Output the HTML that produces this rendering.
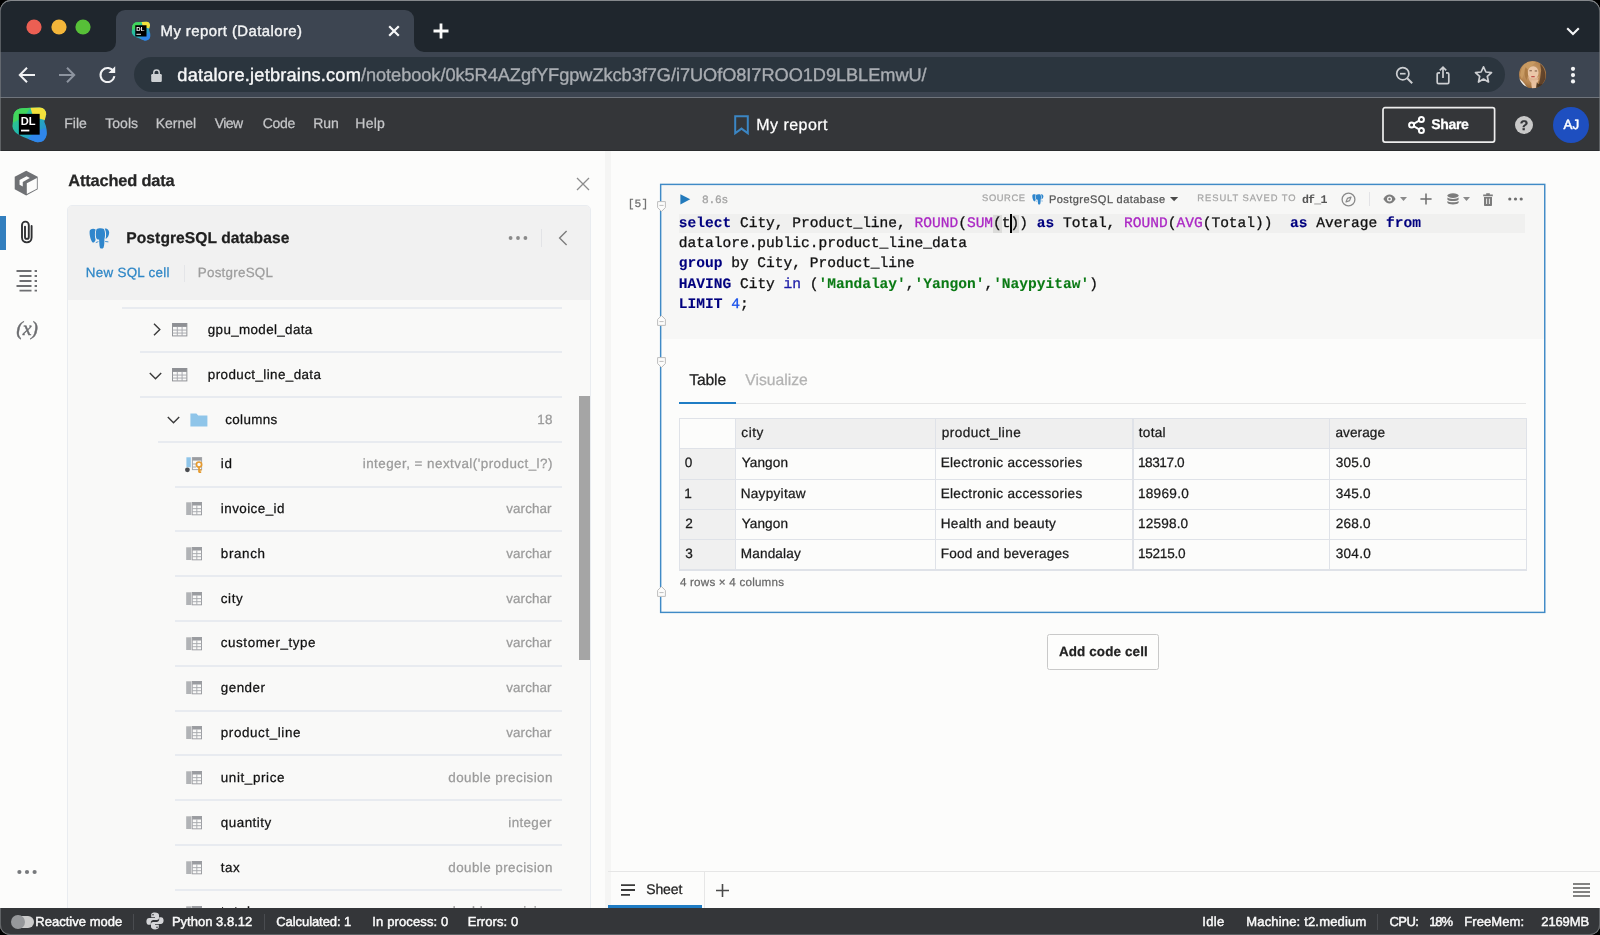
<!DOCTYPE html>
<html lang="en"><head><meta charset="utf-8"><title>My report (Datalore)</title>
<style>

*{box-sizing:border-box;margin:0;padding:0}
html,body{width:1600px;height:935px;overflow:hidden;background:#000}
body{font-family:"Liberation Sans",sans-serif;}
#win{will-change:transform;position:absolute;left:0;top:0;width:1600px;height:935px;overflow:hidden;background:#fcfcfb;border-radius:11px 11px 10px 10px}
.a{position:absolute}
.t{position:absolute;white-space:pre;line-height:1;font-kerning:normal;text-rendering:geometricPrecision}
.s{font-family:"Liberation Sans",sans-serif;-webkit-text-stroke:0.25px currentColor}
.m{font-family:"Liberation Mono",monospace}
.r{font-family:"Liberation Serif",serif}
svg{position:absolute;overflow:visible}
.hl{position:absolute;height:2px;background:#e8ebf0}

.code{position:absolute;white-space:pre;line-height:1;text-rendering:geometricPrecision;-webkit-text-stroke:0.3px currentColor;font-family:"Liberation Mono",monospace;font-size:14.55px;color:#101010}
.code .k{color:#00007f;font-weight:700;-webkit-text-stroke-width:0.1px}
.code .f{color:#ab27c4}
.code .g{color:#0a7a14;font-weight:700;-webkit-text-stroke-width:0.1px}
.code .i{color:#1c1ca8}
.code .n{color:#1750eb}

</style></head>
<body>
<div id="win">
<!-- browser chrome -->
<div class="a" style="left:0;top:0;width:1600px;height:52px;background:#1f262d"></div>
<div class="a" style="left:0;top:52px;width:1600px;height:46px;background:#3d4551"></div>
<div class="a" style="left:116px;top:10px;width:298px;height:43px;background:#3d4551;border-radius:9px 9px 0 0"></div>
<svg style="left:106px;top:42px" width="10" height="10" viewBox="0 0 10 10"><path d="M10 0V10H0A10 10 0 0 0 10 0Z" fill="#3d4551"/></svg>
<svg style="left:414px;top:42px" width="10" height="10" viewBox="0 0 10 10"><path d="M0 0V10H10A10 10 0 0 1 0 0Z" fill="#3d4551"/></svg>
<svg style="left:25.7px;top:19px" width="16" height="16" viewBox="0 0 16 16"><circle cx="8" cy="8" r="7.6" fill="#ec5f53"/></svg>
<svg style="left:50.6px;top:19px" width="16" height="16" viewBox="0 0 16 16"><circle cx="8" cy="8" r="7.6" fill="#f4b63a"/></svg>
<svg style="left:75.4px;top:19px" width="16" height="16" viewBox="0 0 16 16"><circle cx="8" cy="8" r="7.6" fill="#57c038"/></svg>
<svg style="left:131.0px;top:21.0px" width="20.0" height="20.0" viewBox="0 0 40 40"><defs><linearGradient id="fvg" x1="0" y1="0" x2="1" y2="1"><stop offset="0" stop-color="#3bcf6a"/><stop offset="0.45" stop-color="#21b8b0"/><stop offset="1" stop-color="#2f7de1"/></linearGradient></defs><path d="M3 9 Q5 3 12 2.5 L30 1.5 Q38 2 38 9 L36 17 Q40 26 38 33 Q35 40 27 39 L12 33 Q2 29 1.5 22 Z" fill="url(#fvg)"/><path d="M21 2 L31 1.5 Q38 2 38 9 L36.5 15 L24 12 Z" fill="#f3e23c"/><path d="M3 9 Q5 3 12 2.5 L21 2 L14 12 L2 18 Z" fill="#42d65c"/><path d="M26 28 L37 24 Q40 30 37 35 Q34 40 27 39 L18 35.5 Z" fill="#2f86ea"/><rect x="8.5" y="8.5" width="22.5" height="22.5" fill="#000"/><text x="10.6" y="20.3" font-family="Liberation Sans, sans-serif" font-weight="700" font-size="11.5" fill="#fff" textLength="16" lengthAdjust="spacingAndGlyphs">DL</text><rect x="10.8" y="25.6" width="9" height="1.9" fill="#fff"/></svg>
<span class="t s" id="t0" style="left:160.60px;top:25.00px;font-size:14.90px;color:#f3f4f5;letter-spacing:0.428px;-webkit-text-stroke-width:0.4px;">My report (Datalore)</span>
<svg style="left:388px;top:25px" width="12" height="12" viewBox="0 0 12 12"><path d="M1.2 1.2L10.8 10.8M10.8 1.2L1.2 10.8" stroke="#f6f7f8" stroke-width="2.2" fill="none"/></svg>
<svg style="left:433px;top:23px" width="16" height="16" viewBox="0 0 16 16"><path d="M8 0.5V15.5M0.5 8H15.5" stroke="#fafafa" stroke-width="2.8" fill="none"/></svg>
<svg style="left:1566px;top:27px" width="14" height="9" viewBox="0 0 14 9"><path d="M1.2 1.2L7 7L12.8 1.2" stroke="#f4f5f6" stroke-width="2.1" fill="none"/></svg>
<svg style="left:18px;top:65.5px" width="18" height="18" viewBox="0 0 18 18"><path d="M17 9H2.5M9 1.8L1.8 9L9 16.2" stroke="#f1f2f4" stroke-width="2" fill="none"/></svg>
<svg style="left:58px;top:65.5px" width="18" height="18" viewBox="0 0 18 18"><path d="M1 9H15.5M9 1.8L16.2 9L9 16.2" stroke="#8d949f" stroke-width="2" fill="none"/></svg>
<svg style="left:98px;top:65px" width="19" height="19" viewBox="0 0 19 19"><path d="M15.6 6.6A7 7 0 1 0 16.4 11.2" stroke="#f1f2f4" stroke-width="2" fill="none"/><path d="M17.2 1.2V8H10.4Z" fill="#f1f2f4"/></svg>
<div class="a" style="left:134px;top:57px;width:1371px;height:35px;border-radius:17.5px;background:#2b353e"></div>
<svg style="left:151px;top:68.6px" width="11" height="13" viewBox="0 0 11 13"><rect x="0.2" y="5" width="10.6" height="8" rx="1.2" fill="#cdd0d3"/><path d="M2.8 5.4V3.6A2.7 2.7 0 0 1 8.2 3.6V5.4" stroke="#cdd0d3" stroke-width="1.5" fill="none"/></svg>
<span class="t s" id="t1" style="left:177.30px;top:66.01px;font-size:18.20px;color:#f6f7f8;letter-spacing:0.220px;-webkit-text-stroke-width:0.4px;">datalore.jetbrains.com</span>
<span class="t s" id="t2" style="left:360.90px;top:66.01px;font-size:18.20px;color:#a9adb2;letter-spacing:-0.043px;-webkit-text-stroke-width:0.35px;">/notebook/0k5R4AZgfYFgpwZkcb3f7G/i7UOfO8I7ROO1D9LBLEmwU/</span>
<svg style="left:1394.6px;top:65.6px" width="19" height="19" viewBox="0 0 19 19"><circle cx="7.8" cy="7.7" r="6.1" stroke="#cdcfd2" stroke-width="1.7" fill="none"/><path d="M12.2 12.2L17.2 17.2" stroke="#cdcfd2" stroke-width="2"/><path d="M5 7.7H10.6" stroke="#cdcfd2" stroke-width="1.7"/></svg>
<svg style="left:1435.4px;top:64.6px" width="16" height="20" viewBox="0 0 16 20"><path d="M5 7.8H3.6Q2.2 7.8 2.2 9.2V17.2Q2.2 18.6 3.6 18.6H12.4Q13.8 18.6 13.8 17.2V9.2Q13.8 7.8 12.4 7.8H11" stroke="#cdcfd2" stroke-width="1.7" fill="none"/><path d="M8 13V2.4M4.8 5.4L8 2.2L11.2 5.4" stroke="#cdcfd2" stroke-width="1.7" fill="none"/></svg>
<svg style="left:1474px;top:65px" width="19" height="19" viewBox="0 0 19 19"><path d="M9.5 1.8L11.9 7L17.5 7.6L13.3 11.4L14.5 17L9.5 14.1L4.5 17L5.7 11.4L1.5 7.6L7.1 7Z" stroke="#cdcfd2" stroke-width="1.7" fill="none" stroke-linejoin="round"/></svg>
<svg style="left:1519.3px;top:60.8px" width="27.2" height="27.4" viewBox="0 0 27 27"><defs><clipPath id="avc"><circle cx="13.5" cy="13.5" r="13.5"/></clipPath><radialGradient id="avh" cx="0.45" cy="0.4" r="0.7"><stop offset="0" stop-color="#d2a877"/><stop offset="0.6" stop-color="#b58450"/><stop offset="1" stop-color="#8a5c30"/></radialGradient></defs><g clip-path="url(#avc)"><rect width="27" height="27" fill="url(#avh)"/><path d="M21 3C25 6 27 12 26 18L22 25L19 26L21 17L22 9Z" fill="#4a3220" opacity="0.75"/><path d="M3 6C6 1 12 -1 17 1L12 5L6 10L3 18L1 14Z" fill="#c99b63" opacity="0.9"/><ellipse cx="14" cy="11.6" rx="5.4" ry="6.6" fill="#eac7a8"/><path d="M9 15C10 20 12 22 14.5 22C17 22 19 19 19.6 15C17 18 12 18 9 15Z" fill="#dfb592"/><path d="M10.4 9.6H12.8M15.6 9.8H18" stroke="#6b4a34" stroke-width="0.9"/><path d="M12.2 15.4H15.6" stroke="#c0504a" stroke-width="1.1"/><path d="M12.5 19C12 22 12.4 25 13 27.5L17 27.5C17.4 24 17.8 21 19.8 18.2C17.6 19 15 19.4 12.5 19Z" fill="#e8c09e"/><path d="M0 17C3 19 6 23 9 27.5L0 27.5Z" fill="#f1efec"/><path d="M6.5 6C5 10 5 15 7.5 19L9 14L8.4 8Z" fill="#a87843" opacity="0.9"/><path d="M17.6 21C19 23 21.6 24 23.4 22.6L21 27L17 27Z" fill="#3b2a1c" opacity="0.8"/></g></svg>
<svg style="left:1569.5px;top:65.6px" width="6" height="18" viewBox="0 0 6 18"><circle cx="3" cy="2.8" r="2.1" fill="#f4f5f6"/><circle cx="3" cy="9.1" r="2.1" fill="#f4f5f6"/><circle cx="3" cy="15.4" r="2.1" fill="#f4f5f6"/></svg>
<!-- app header -->
<div class="a" style="left:0;top:98px;width:1600px;height:53px;background:#343639"></div>
<div class="a" style="left:0;top:97px;width:1600px;height:1px;background:#6f747c"></div>
<div class="a" style="left:0;top:150px;width:1600px;height:1px;background:#2a2c2e"></div>
<svg style="left:10.8px;top:106.2px" width="37.0" height="37.0" viewBox="0 0 40 40"><defs><linearGradient id="lgg" x1="0" y1="0" x2="1" y2="1"><stop offset="0" stop-color="#3bcf6a"/><stop offset="0.45" stop-color="#21b8b0"/><stop offset="1" stop-color="#2f7de1"/></linearGradient></defs><path d="M3 9 Q5 3 12 2.5 L30 1.5 Q38 2 38 9 L36 17 Q40 26 38 33 Q35 40 27 39 L12 33 Q2 29 1.5 22 Z" fill="url(#lgg)"/><path d="M21 2 L31 1.5 Q38 2 38 9 L36.5 15 L24 12 Z" fill="#f3e23c"/><path d="M3 9 Q5 3 12 2.5 L21 2 L14 12 L2 18 Z" fill="#42d65c"/><path d="M26 28 L37 24 Q40 30 37 35 Q34 40 27 39 L18 35.5 Z" fill="#2f86ea"/><rect x="8.5" y="8.5" width="22.5" height="22.5" fill="#000"/><text x="10.6" y="20.3" font-family="Liberation Sans, sans-serif" font-weight="700" font-size="11.5" fill="#fff" textLength="16" lengthAdjust="spacingAndGlyphs">DL</text><rect x="10.8" y="25.6" width="9" height="1.9" fill="#fff"/></svg>
<span class="t s" id="t3" style="left:64.30px;top:116.01px;font-size:14.00px;color:#c6c7c9;letter-spacing:-0.024px;">File</span>
<span class="t s" id="t4" style="left:105.30px;top:116.01px;font-size:14.00px;color:#c6c7c9;letter-spacing:0.004px;">Tools</span>
<span class="t s" id="t5" style="left:155.80px;top:116.01px;font-size:14.00px;color:#c6c7c9;letter-spacing:-0.032px;">Kernel</span>
<span class="t s" id="t6" style="left:214.80px;top:116.01px;font-size:14.00px;color:#c6c7c9;letter-spacing:-0.594px;">View</span>
<span class="t s" id="t7" style="left:262.80px;top:116.01px;font-size:14.00px;color:#c6c7c9;letter-spacing:-0.328px;">Code</span>
<span class="t s" id="t8" style="left:313.30px;top:116.01px;font-size:14.00px;color:#c6c7c9;letter-spacing:-0.098px;">Run</span>
<span class="t s" id="t9" style="left:355.30px;top:116.01px;font-size:14.00px;color:#c6c7c9;letter-spacing:0.231px;">Help</span>
<svg style="left:734px;top:115px" width="15" height="20" viewBox="0 0 15 20"><path d="M1.2 1.2H13.8V18.2L7.5 13.6L1.2 18.2Z" stroke="#3b86c4" stroke-width="2" fill="none" stroke-linejoin="miter"/></svg>
<span class="t s" id="t10" style="left:756.30px;top:118.01px;font-size:16.00px;color:#ffffff;letter-spacing:0.447px;">My report</span>
<svg style="left:1381px;top:106px" width="115" height="38" viewBox="0 0 115 38"><rect x="2" y="1.7" width="111.6" height="34.4" rx="2" fill="none" stroke="#eeeeee" stroke-width="1.7"/></svg>
<svg style="left:1408px;top:116px" width="17" height="18" viewBox="0 0 17 18"><path d="M13.2 3.4L3.8 9L13.2 14.6" stroke="#fff" stroke-width="2" fill="none"/><circle cx="13.4" cy="3.4" r="2.5" fill="#343639" stroke="#fff" stroke-width="2"/><circle cx="3.6" cy="9" r="2.5" fill="#343639" stroke="#fff" stroke-width="2"/><circle cx="13.4" cy="14.6" r="2.5" fill="#343639" stroke="#fff" stroke-width="2"/></svg>
<span class="t s" id="t11" style="left:1431.30px;top:117.01px;font-size:14.00px;color:#ffffff;font-weight:700;letter-spacing:-0.356px;">Share</span>
<div class="a" style="left:1515px;top:116px;width:18px;height:18px;border-radius:50%;background:#c9c9c9"></div>
<span class="t s" id="t12" style="left:1519.85px;top:118.01px;font-size:14.00px;color:#343639;font-weight:700;">?</span>
<div class="a" style="left:1553px;top:107px;width:36px;height:36px;border-radius:50%;background:#1e4fc0"></div>
<span class="t s" id="t13" style="left:1563.60px;top:118.00px;font-size:13.40px;color:#ffffff;letter-spacing:0.069px;-webkit-text-stroke-width:0.5px;">AJ</span>
<!-- left tool strip -->
<div class="a" style="left:0;top:215.5px;width:5.8px;height:34px;background:#337fbe"></div>
<svg style="left:13.4px;top:169.6px" width="26.4" height="26.2" viewBox="0 0 26 26"><path d="M13 0.8L24.4 6.8V19.2L13 25.2L1.6 19.2V6.8Z" fill="#6f7174"/><path d="M13.6 13.2L23.6 8V18.6L13.6 23.8Z" fill="#fcfcfb"/><path d="M6.4 10L13.4 6.2L16.6 8L9.6 11.8V16.4L6.4 14.6Z" fill="#fcfcfb"/></svg>
<svg style="left:20px;top:219px" width="14" height="26" viewBox="0 0 14 26"><path d="M11.6 7V18.6A4.8 4.8 0 0 1 2 18.6V6A3.4 3.4 0 0 1 8.8 6V18A1.9 1.9 0 0 1 5 18V7.6" stroke="#303133" stroke-width="1.9" fill="none" stroke-linecap="round"/></svg>
<svg style="left:16px;top:269px" width="22" height="23" viewBox="0 0 22 23"><path d="M0.5 2H15.5M3.5 7H15.5M3.5 12H15.5M0.5 17H15.5M3.5 21.6H15.5" stroke="#6e6f72" stroke-width="1.9"/><path d="M18.6 2H21M18.6 7H21M18.6 12H21M18.6 17H21M18.6 21.6H21" stroke="#6e6f72" stroke-width="1.9"/></svg>
<span class="t r" id="t14" style="left:16.30px;top:319.00px;font-size:20.00px;color:#6c6d70;font-style:italic;letter-spacing:-0.319px;-webkit-text-stroke:0.4px #6c6d70;">(x)</span>
<svg style="left:17px;top:869px" width="20" height="6" viewBox="0 0 20 6"><circle cx="2.4" cy="3" r="2.1" fill="#77797c"/><circle cx="10" cy="3" r="2.1" fill="#77797c"/><circle cx="17.6" cy="3" r="2.1" fill="#77797c"/></svg>
<!-- attached data panel -->
<span class="t s" id="t15" style="left:68.30px;top:173.00px;font-size:16.40px;color:#262626;font-weight:700;letter-spacing:-0.172px;">Attached data</span>
<svg style="left:576px;top:177px" width="14" height="14" viewBox="0 0 14 14"><path d="M1 1L13 13M13 1L1 13" stroke="#8c8c8c" stroke-width="1.3" fill="none"/></svg>
<div class="a" style="left:67px;top:205px;width:524px;height:720px;background:#f9f9f8;border:1px solid #e9ecf0;border-radius:5px 5px 0 0"></div>
<div class="a" style="left:68px;top:206px;width:522px;height:94px;background:#f1f1f1;border-radius:4px 4px 0 0"></div>
<svg style="left:88.6px;top:227.8px" width="20.4" height="20.8" viewBox="0 0 20.4 20.8"><path d="M0.6 3.4C0.6 1 4.6 -0.2 6.6 1.6C5.6 4.6 5.8 9 6.6 12C5.8 14 4.4 15 3.6 14.4C1.6 12 0.4 7 0.6 3.4Z" fill="#2f86cc"/><path d="M7.4 1.4C9.4 0 13 0 15 1C16.4 4 16.4 8 15.4 11.2C15.4 14 15.4 17 14.6 19.4C13.8 21 11.6 21 10.9 19.4C10.2 17 10.3 13.4 10.1 11.4C8.6 11.8 7.7 11 7.2 10C6.6 7 6.7 4 7.4 1.4Z" fill="#2f86cc"/><path d="M15.8 0.6C18.2 0.2 20.2 2 20.2 4.6C20.2 7.6 18.6 10 16.6 11C17.4 8 17.4 4 15.8 0.6Z" fill="#2f86cc"/><path d="M6.8 14.6L9.4 13.6M16.2 13.5L19.4 13.9" stroke="#2f86cc" stroke-width="0.9" fill="none"/></svg>
<span class="t s" id="t16" style="left:126.30px;top:231.02px;font-size:15.60px;color:#1e1e1e;font-weight:700;letter-spacing:0.073px;">PostgreSQL database</span>
<svg style="left:508px;top:235px" width="20" height="6" viewBox="0 0 20 6"><circle cx="2.6" cy="3" r="1.9" fill="#8a8a8a"/><circle cx="10" cy="3" r="1.9" fill="#8a8a8a"/><circle cx="17.4" cy="3" r="1.9" fill="#8a8a8a"/></svg>
<div class="a" style="left:541px;top:229px;width:1px;height:18px;background:#e2e3e6"></div>
<svg style="left:558px;top:230px" width="10" height="16" viewBox="0 0 10 16"><path d="M8.6 1L1.6 8L8.6 15" stroke="#7d7d7d" stroke-width="1.4" fill="none"/></svg>
<span class="t s" id="t17" style="left:85.80px;top:266.00px;font-size:13.40px;color:#2d86c6;letter-spacing:0.278px;">New SQL cell</span>
<div class="a" style="left:183.5px;top:265px;width:1.5px;height:17px;background:#e4e5e8"></div>
<span class="t s" id="t18" style="left:197.80px;top:266.00px;font-size:13.40px;color:#9d9d9d;letter-spacing:0.245px;">PostgreSQL</span>
<div class="hl" style="left:122px;top:306.7px;width:440px"></div>
<div class="hl" style="left:140px;top:351.2px;width:422px"></div>
<div class="hl" style="left:140px;top:396px;width:422px"></div>
<div class="hl" style="left:158px;top:440.8px;width:404px"></div>
<div class="hl" style="left:175px;top:485.5px;width:387px"></div>
<div class="hl" style="left:175px;top:530.3px;width:387px"></div>
<div class="hl" style="left:175px;top:575.1px;width:387px"></div>
<div class="hl" style="left:175px;top:620.0px;width:387px"></div>
<div class="hl" style="left:175px;top:664.8px;width:387px"></div>
<div class="hl" style="left:175px;top:709.6px;width:387px"></div>
<div class="hl" style="left:175px;top:754.4px;width:387px"></div>
<div class="hl" style="left:175px;top:799.2px;width:387px"></div>
<div class="hl" style="left:175px;top:844.1px;width:387px"></div>
<div class="hl" style="left:175px;top:888.9px;width:387px"></div>
<svg style="left:152.6px;top:323.3px" width="8" height="13" viewBox="0 0 8 13"><path d="M1 0.8L6.8 6.5L1 12.2" stroke="#3a3a3a" stroke-width="1.4" fill="none"/></svg>
<svg style="left:172.4px;top:323px" width="15.4" height="13.4" viewBox="0 0 16 14"><rect x="0.5" y="0.5" width="15" height="13" fill="#f9f9f8" stroke="#8e9094"/><rect x="0.5" y="0.5" width="15" height="3.6" fill="#8e9094"/><path d="M0.5 7.4H15.5M0.5 10.5H15.5M5.5 4V13.5M10.5 4V13.5" stroke="#a7a9ad" stroke-width="1"/></svg>
<span class="t s" id="t19" style="left:207.80px;top:323.01px;font-size:13.40px;color:#111111;letter-spacing:0.360px;">gpu_model_data</span>
<svg style="left:149.2px;top:371.6px" width="13" height="8" viewBox="0 0 13 8"><path d="M0.8 1L6.5 6.8L12.2 1" stroke="#3a3a3a" stroke-width="1.4" fill="none"/></svg>
<svg style="left:172.4px;top:367.7px" width="15.4" height="13.4" viewBox="0 0 16 14"><rect x="0.5" y="0.5" width="15" height="13" fill="#f9f9f8" stroke="#8e9094"/><rect x="0.5" y="0.5" width="15" height="3.6" fill="#8e9094"/><path d="M0.5 7.4H15.5M0.5 10.5H15.5M5.5 4V13.5M10.5 4V13.5" stroke="#a7a9ad" stroke-width="1"/></svg>
<span class="t s" id="t20" style="left:207.80px;top:368.00px;font-size:13.40px;color:#111111;letter-spacing:0.418px;">product_line_data</span>
<svg style="left:167px;top:416.3px" width="13" height="8" viewBox="0 0 13 8"><path d="M0.8 1L6.5 6.8L12.2 1" stroke="#3a3a3a" stroke-width="1.4" fill="none"/></svg>
<svg style="left:190px;top:413px" width="18" height="14" viewBox="0 0 18 14"><path d="M0.4 0.4H6.4L8.2 2.6H17.4V13.4H0.4Z" fill="#8fc5e9"/></svg>
<span class="t s" id="t21" style="left:225.30px;top:413.00px;font-size:13.40px;color:#111111;letter-spacing:0.339px;">columns</span>
<span class="t s" id="t22" style="left:537.30px;top:413.00px;font-size:13.40px;color:#9b9b9b;letter-spacing:0.253px;">18</span>
<svg style="left:185px;top:457px" width="19" height="16" viewBox="0 0 19 16"><rect x="1.4" y="0.3" width="4.4" height="10" fill="#8fc5e9"/><rect x="7.4" y="0.6" width="9.2" height="12" fill="#f9f9f8" stroke="#a7a9ad"/><rect x="7.4" y="0.6" width="9.2" height="3" fill="#9a9ca0"/><path d="M7.4 7H12M7.4 10H11" stroke="#a7a9ad"/><circle cx="2.4" cy="12.8" r="2.4" fill="#4a4c50"/><circle cx="14" cy="7.6" r="2.6" fill="none" stroke="#e59a2f" stroke-width="1.7"/><path d="M14 10V15.4M14 13H16.6M14 15.2H16.2" stroke="#e59a2f" stroke-width="1.7" fill="none"/></svg>
<span class="t s" id="t23" style="left:220.80px;top:457.01px;font-size:13.40px;color:#111111;letter-spacing:0.725px;">id</span>
<span class="t s" id="t24" style="left:362.70px;top:457.01px;font-size:13.40px;color:#9b9b9b;letter-spacing:0.471px;">integer, = nextval('product_l?)</span>
<svg style="left:186px;top:502.12px" width="16" height="13.3" viewBox="0 0 17 14" preserveAspectRatio="none"><rect x="0.2" y="0.3" width="5.4" height="13.4" fill="#b1b3b6"/><rect x="6.6" y="0.5" width="9.9" height="13" fill="#f9f9f8" stroke="#9a9ca0"/><rect x="6.6" y="0.5" width="9.9" height="3.2" fill="#9a9ca0"/><path d="M6.6 7H16.5M6.6 10.2H16.5M11.5 3.6V13.5" stroke="#a7a9ad" stroke-width="1"/></svg>
<span class="t s" id="t25" style="left:220.80px;top:502.00px;font-size:13.40px;color:#111111;letter-spacing:0.455px;">invoice_id</span>
<span class="t s" id="t26" style="left:506.30px;top:502.00px;font-size:13.40px;color:#9b9b9b;letter-spacing:0.085px;">varchar</span>
<svg style="left:186px;top:546.94px" width="16" height="13.3" viewBox="0 0 17 14" preserveAspectRatio="none"><rect x="0.2" y="0.3" width="5.4" height="13.4" fill="#b1b3b6"/><rect x="6.6" y="0.5" width="9.9" height="13" fill="#f9f9f8" stroke="#9a9ca0"/><rect x="6.6" y="0.5" width="9.9" height="3.2" fill="#9a9ca0"/><path d="M6.6 7H16.5M6.6 10.2H16.5M11.5 3.6V13.5" stroke="#a7a9ad" stroke-width="1"/></svg>
<span class="t s" id="t27" style="left:220.80px;top:547.01px;font-size:13.40px;color:#111111;letter-spacing:0.641px;">branch</span>
<span class="t s" id="t28" style="left:506.30px;top:547.01px;font-size:13.40px;color:#9b9b9b;letter-spacing:0.085px;">varchar</span>
<svg style="left:186px;top:591.76px" width="16" height="13.3" viewBox="0 0 17 14" preserveAspectRatio="none"><rect x="0.2" y="0.3" width="5.4" height="13.4" fill="#b1b3b6"/><rect x="6.6" y="0.5" width="9.9" height="13" fill="#f9f9f8" stroke="#9a9ca0"/><rect x="6.6" y="0.5" width="9.9" height="3.2" fill="#9a9ca0"/><path d="M6.6 7H16.5M6.6 10.2H16.5M11.5 3.6V13.5" stroke="#a7a9ad" stroke-width="1"/></svg>
<span class="t s" id="t29" style="left:220.80px;top:592.00px;font-size:13.40px;color:#111111;letter-spacing:0.603px;">city</span>
<span class="t s" id="t30" style="left:506.30px;top:592.00px;font-size:13.40px;color:#9b9b9b;letter-spacing:0.085px;">varchar</span>
<svg style="left:186px;top:636.58px" width="16" height="13.3" viewBox="0 0 17 14" preserveAspectRatio="none"><rect x="0.2" y="0.3" width="5.4" height="13.4" fill="#b1b3b6"/><rect x="6.6" y="0.5" width="9.9" height="13" fill="#f9f9f8" stroke="#9a9ca0"/><rect x="6.6" y="0.5" width="9.9" height="3.2" fill="#9a9ca0"/><path d="M6.6 7H16.5M6.6 10.2H16.5M11.5 3.6V13.5" stroke="#a7a9ad" stroke-width="1"/></svg>
<span class="t s" id="t31" style="left:220.80px;top:636.01px;font-size:13.40px;color:#111111;letter-spacing:0.569px;">customer_type</span>
<span class="t s" id="t32" style="left:506.30px;top:636.01px;font-size:13.40px;color:#9b9b9b;letter-spacing:0.085px;">varchar</span>
<svg style="left:186px;top:681.4px" width="16" height="13.3" viewBox="0 0 17 14" preserveAspectRatio="none"><rect x="0.2" y="0.3" width="5.4" height="13.4" fill="#b1b3b6"/><rect x="6.6" y="0.5" width="9.9" height="13" fill="#f9f9f8" stroke="#9a9ca0"/><rect x="6.6" y="0.5" width="9.9" height="3.2" fill="#9a9ca0"/><path d="M6.6 7H16.5M6.6 10.2H16.5M11.5 3.6V13.5" stroke="#a7a9ad" stroke-width="1"/></svg>
<span class="t s" id="t33" style="left:220.80px;top:681.00px;font-size:13.40px;color:#111111;letter-spacing:0.493px;">gender</span>
<span class="t s" id="t34" style="left:506.30px;top:681.00px;font-size:13.40px;color:#9b9b9b;letter-spacing:0.085px;">varchar</span>
<svg style="left:186px;top:726.22px" width="16" height="13.3" viewBox="0 0 17 14" preserveAspectRatio="none"><rect x="0.2" y="0.3" width="5.4" height="13.4" fill="#b1b3b6"/><rect x="6.6" y="0.5" width="9.9" height="13" fill="#f9f9f8" stroke="#9a9ca0"/><rect x="6.6" y="0.5" width="9.9" height="3.2" fill="#9a9ca0"/><path d="M6.6 7H16.5M6.6 10.2H16.5M11.5 3.6V13.5" stroke="#a7a9ad" stroke-width="1"/></svg>
<span class="t s" id="t35" style="left:220.80px;top:726.01px;font-size:13.40px;color:#111111;letter-spacing:0.608px;">product_line</span>
<span class="t s" id="t36" style="left:506.30px;top:726.01px;font-size:13.40px;color:#9b9b9b;letter-spacing:0.085px;">varchar</span>
<svg style="left:186px;top:771.04px" width="16" height="13.3" viewBox="0 0 17 14" preserveAspectRatio="none"><rect x="0.2" y="0.3" width="5.4" height="13.4" fill="#b1b3b6"/><rect x="6.6" y="0.5" width="9.9" height="13" fill="#f9f9f8" stroke="#9a9ca0"/><rect x="6.6" y="0.5" width="9.9" height="3.2" fill="#9a9ca0"/><path d="M6.6 7H16.5M6.6 10.2H16.5M11.5 3.6V13.5" stroke="#a7a9ad" stroke-width="1"/></svg>
<span class="t s" id="t37" style="left:220.80px;top:771.00px;font-size:13.40px;color:#111111;letter-spacing:0.621px;">unit_price</span>
<span class="t s" id="t38" style="left:448.30px;top:771.00px;font-size:13.40px;color:#9b9b9b;letter-spacing:0.442px;">double precision</span>
<svg style="left:186px;top:815.86px" width="16" height="13.3" viewBox="0 0 17 14" preserveAspectRatio="none"><rect x="0.2" y="0.3" width="5.4" height="13.4" fill="#b1b3b6"/><rect x="6.6" y="0.5" width="9.9" height="13" fill="#f9f9f8" stroke="#9a9ca0"/><rect x="6.6" y="0.5" width="9.9" height="3.2" fill="#9a9ca0"/><path d="M6.6 7H16.5M6.6 10.2H16.5M11.5 3.6V13.5" stroke="#a7a9ad" stroke-width="1"/></svg>
<span class="t s" id="t39" style="left:220.80px;top:816.00px;font-size:13.40px;color:#111111;letter-spacing:0.499px;">quantity</span>
<span class="t s" id="t40" style="left:508.30px;top:816.00px;font-size:13.40px;color:#9b9b9b;letter-spacing:0.369px;">integer</span>
<svg style="left:186px;top:860.68px" width="16" height="13.3" viewBox="0 0 17 14" preserveAspectRatio="none"><rect x="0.2" y="0.3" width="5.4" height="13.4" fill="#b1b3b6"/><rect x="6.6" y="0.5" width="9.9" height="13" fill="#f9f9f8" stroke="#9a9ca0"/><rect x="6.6" y="0.5" width="9.9" height="3.2" fill="#9a9ca0"/><path d="M6.6 7H16.5M6.6 10.2H16.5M11.5 3.6V13.5" stroke="#a7a9ad" stroke-width="1"/></svg>
<span class="t s" id="t41" style="left:220.80px;top:861.01px;font-size:13.40px;color:#111111;letter-spacing:0.516px;">tax</span>
<span class="t s" id="t42" style="left:448.30px;top:861.01px;font-size:13.40px;color:#9b9b9b;letter-spacing:0.442px;">double precision</span>
<svg style="left:186px;top:905.5px" width="16" height="13.3" viewBox="0 0 17 14" preserveAspectRatio="none"><rect x="0.2" y="0.3" width="5.4" height="13.4" fill="#b1b3b6"/><rect x="6.6" y="0.5" width="9.9" height="13" fill="#f9f9f8" stroke="#9a9ca0"/><rect x="6.6" y="0.5" width="9.9" height="3.2" fill="#9a9ca0"/><path d="M6.6 7H16.5M6.6 10.2H16.5M11.5 3.6V13.5" stroke="#a7a9ad" stroke-width="1"/></svg>
<span class="t s" id="t43" style="left:220.80px;top:905.00px;font-size:13.40px;color:#111111;letter-spacing:0.966px;">total</span>
<span class="t s" id="t44" style="left:448.30px;top:905.00px;font-size:13.40px;color:#9b9b9b;letter-spacing:0.442px;">double precision</span>
<div class="a" style="left:579px;top:395.5px;width:11.4px;height:264px;background:#a5a5a5"></div>
<div class="a" style="left:605px;top:151px;width:6px;height:757px;background:#f5f5f4"></div>
<!-- notebook cell -->
<div class="a" style="left:661px;top:185px;width:884px;height:153.5px;background:#f7f7f6"></div>
<div class="a" style="left:679px;top:214px;width:846px;height:19px;background:#f0f0ef"></div>
<svg style="left:658px;top:182px" width="890" height="433" viewBox="0 0 890 433"><rect x="2.65" y="2.4" width="884.1" height="428" fill="none" stroke="#3f8ac6" stroke-width="1.45"/></svg>
<span class="t m" id="t45" style="left:627.70px;top:200.01px;font-size:11.20px;color:#727272;letter-spacing:0.136px;-webkit-text-stroke:0.3px #727272;">[5]</span>
<svg style="left:657px;top:201.3px" width="9" height="11" viewBox="0 0 9 11"><path d="M0.6 0.6H8.4V6.6L4.5 10.4L0.6 6.6Z" fill="#fcfcfb" stroke="#bdbdbd" stroke-width="1"/><path d="M2.4 4.4H6.6" stroke="#bdbdbd" stroke-width="1"/></svg>
<svg style="left:657px;top:315px" width="9" height="11" viewBox="0 0 9 11"><path d="M0.6 10.4H8.4V4.4L4.5 0.6L0.6 4.4Z" fill="#fcfcfb" stroke="#bdbdbd" stroke-width="1"/><path d="M2.4 6.6H6.6" stroke="#bdbdbd" stroke-width="1"/></svg>
<svg style="left:657px;top:356.5px" width="9" height="11" viewBox="0 0 9 11"><path d="M0.6 0.6H8.4V6.6L4.5 10.4L0.6 6.6Z" fill="#fcfcfb" stroke="#bdbdbd" stroke-width="1"/><path d="M2.4 4.4H6.6" stroke="#bdbdbd" stroke-width="1"/></svg>
<svg style="left:657px;top:586px" width="9" height="11" viewBox="0 0 9 11"><path d="M0.6 10.4H8.4V4.4L4.5 0.6L0.6 4.4Z" fill="#fcfcfb" stroke="#bdbdbd" stroke-width="1"/><path d="M2.4 6.6H6.6" stroke="#bdbdbd" stroke-width="1"/></svg>
<svg style="left:680.2px;top:193.6px" width="10.6" height="10.6" viewBox="0 0 11.4 11.4"><path d="M0.4 0.2L11 5.7L0.4 11.2Z" fill="#237abc"/></svg>
<span class="t m" id="t46" style="left:702.10px;top:196.01px;font-size:11.20px;color:#a3a3a3;letter-spacing:-0.214px;-webkit-text-stroke:0.3px #a3a3a3;">8.6s</span>
<span class="t s" id="t47" style="left:982.10px;top:193.02px;font-size:9.40px;color:#a6a6a6;letter-spacing:0.569px;">SOURCE</span>
<svg style="left:1031.8px;top:193.8px" width="11.5" height="10.6" viewBox="0 0 20.4 20.8" preserveAspectRatio="none"><path d="M0.6 3.4C0.6 1 4.6 -0.2 6.6 1.6C5.6 4.6 5.8 9 6.6 12C5.8 14 4.4 15 3.6 14.4C1.6 12 0.4 7 0.6 3.4Z" fill="#2f86cc"/><path d="M7.4 1.4C9.4 0 13 0 15 1C16.4 4 16.4 8 15.4 11.2C15.4 14 15.4 17 14.6 19.4C13.8 21 11.6 21 10.9 19.4C10.2 17 10.3 13.4 10.1 11.4C8.6 11.8 7.7 11 7.2 10C6.6 7 6.7 4 7.4 1.4Z" fill="#2f86cc"/><path d="M15.8 0.6C18.2 0.2 20.2 2 20.2 4.6C20.2 7.6 18.6 10 16.6 11C17.4 8 17.4 4 15.8 0.6Z" fill="#2f86cc"/><path d="M6.8 14.6L9.4 13.6M16.2 13.5L19.4 13.9" stroke="#2f86cc" stroke-width="0.9" fill="none"/></svg>
<span class="t s" id="t48" style="left:1048.90px;top:195.00px;font-size:11.00px;color:#555555;letter-spacing:0.466px;">PostgreSQL database</span>
<svg style="left:1170.3px;top:197.1px" width="8.2" height="4.2" viewBox="0 0 9 5" preserveAspectRatio="none"><path d="M0 0H9L4.5 5Z" fill="#4a4a4a"/></svg>
<span class="t s" id="t49" style="left:1197.30px;top:193.02px;font-size:9.40px;color:#a6a6a6;letter-spacing:0.940px;">RESULT SAVED TO</span>
<span class="t m" id="t50" style="left:1301.90px;top:195.00px;font-size:11.60px;color:#555555;font-weight:700;letter-spacing:-0.724px;">df_1</span>
<svg style="left:1340.6px;top:191.6px" width="15" height="15" viewBox="0 0 15 15"><circle cx="7.5" cy="7.5" r="6.4" stroke="#8a8a8a" stroke-width="1.3" fill="none"/><path d="M5 10L6.4 6.4L10 5L8.6 8.6Z" stroke="#8a8a8a" stroke-width="1.2" fill="none" stroke-linejoin="round"/></svg>
<div class="a" style="left:1368.6px;top:192px;width:1px;height:14px;background:#e3e3e6"></div>
<svg style="left:1383.4px;top:194px" width="13" height="10" viewBox="0 0 13 10"><path d="M0.4 5C2.2 1.6 4.4 0.6 6.5 0.6C8.6 0.6 10.8 1.6 12.6 5C10.8 8.4 8.6 9.4 6.5 9.4C4.4 9.4 2.2 8.4 0.4 5Z" fill="#7c7c7c"/><circle cx="6.5" cy="5" r="2.5" fill="#f7f7f6"/><circle cx="6.5" cy="5" r="1.2" fill="#7c7c7c"/></svg>
<svg style="left:1400px;top:197px" width="7" height="4" viewBox="0 0 7 4"><path d="M0 0H7L3.5 4Z" fill="#8a8a8a"/></svg>
<svg style="left:1419.6px;top:193.4px" width="12" height="12" viewBox="0 0 12 12"><path d="M6 0.4V11.6M0.4 6H11.6" stroke="#6e6e6e" stroke-width="1.5"/></svg>
<svg style="left:1446.6px;top:193.4px" width="12" height="12" viewBox="0 0 12 12"><ellipse cx="6" cy="2.6" rx="5.6" ry="2.4" fill="#7c7c7c"/><path d="M0.4 4.6C1.4 6.4 10.6 6.4 11.6 4.6V6.6C10.6 8.6 1.4 8.6 0.4 6.6Z" fill="#7c7c7c"/><path d="M0.4 8C1.4 9.8 10.6 9.8 11.6 8V9.8C10.6 12 1.4 12 0.4 9.8Z" fill="#7c7c7c"/></svg>
<svg style="left:1462.6px;top:197px" width="7" height="4" viewBox="0 0 7 4"><path d="M0 0H7L3.5 4Z" fill="#8a8a8a"/></svg>
<svg style="left:1482.6px;top:192.6px" width="10" height="13" viewBox="0 0 10 13"><path d="M0.2 1.6H9.8V3.2H0.2Z M3.2 0.2H6.8V1.6H3.2Z M1 4H9V12C9 12.6 8.6 13 8 13H2C1.4 13 1 12.6 1 12Z" fill="#7c7c7c"/><path d="M3.6 5.6V11M6.4 5.6V11" stroke="#f7f7f6" stroke-width="0.9"/></svg>
<svg style="left:1508px;top:197.2px" width="15" height="4" viewBox="0 0 15 4"><circle cx="1.8" cy="2" r="1.6" fill="#6e6e6e"/><circle cx="7.5" cy="2" r="1.6" fill="#6e6e6e"/><circle cx="13.2" cy="2" r="1.6" fill="#6e6e6e"/></svg>
<div class="a" style="left:993.2px;top:215px;width:8.8px;height:17.6px;background:#dcdcda"></div>
<div class="a" style="left:1010.6px;top:215px;width:8.8px;height:17.6px;background:#dcdcda"></div>
<div class="code" style="left:678.8px;top:217.00px"><span class="k">select</span> City, Product_line, <span class="f">ROUND</span>(<span class="f">SUM</span>(t)) <span class="k">as</span> Total, <span class="f">ROUND</span>(<span class="f">AVG</span>(Total))  <span class="k">as</span> Average <span class="k">from</span></div>
<div class="code" style="left:678.8px;top:237.00px">datalore.public.product_line_data</div>
<div class="code" style="left:678.8px;top:257.00px"><span class="k">group</span> by City, Product_line</div>
<div class="code" style="left:678.8px;top:278.00px"><span class="k">HAVING</span> City <span class="i">in</span> (<span class="g">'Mandalay'</span>,<span class="g">'Yangon'</span>,<span class="g">'Naypyitaw'</span>)</div>
<div class="code" style="left:678.8px;top:298.00px"><span class="k">LIMIT</span> <span class="n">4</span>;</div>
<div class="a" style="left:1010.0px;top:213.5px;width:2px;height:19.5px;background:#000"></div>
<span class="t s" id="t51" style="left:689.30px;top:373.01px;font-size:15.70px;color:#1e1e1e;letter-spacing:-0.169px;">Table</span>
<span class="t s" id="t52" style="left:745.30px;top:373.01px;font-size:15.70px;color:#b3b3b3;letter-spacing:-0.009px;">Visualize</span>
<div class="a" style="left:736px;top:403px;width:790px;height:1px;background:#e6e6e6"></div>
<div class="a" style="left:679px;top:401.6px;width:57.2px;height:2.6px;background:#1f7cc4"></div>
<div class="a" style="left:735.6px;top:418.4px;width:790.7px;height:29.8px;background:#efefef"></div>
<div class="a" style="left:679.4px;top:448.2px;width:56.2px;height:121.8px;background:#f0f0f0"></div>
<div class="a" style="left:679.4px;top:417.7px;width:847.5px;height:1.4px;background:#dfe2e8"></div>
<div class="a" style="left:679.4px;top:447.5px;width:847.5px;height:1.4px;background:#dfe2e8"></div>
<div class="a" style="left:679.4px;top:478.7px;width:847.5px;height:1.4px;background:#dfe2e8"></div>
<div class="a" style="left:679.4px;top:508.7px;width:847.5px;height:1.4px;background:#dfe2e8"></div>
<div class="a" style="left:679.4px;top:538.5px;width:847.5px;height:1.4px;background:#dfe2e8"></div>
<div class="a" style="left:679.4px;top:569.3px;width:847.5px;height:1.4px;background:#dfe2e8"></div>
<div class="a" style="left:678.8px;top:418.4px;width:1.3px;height:151.6px;background:#dfe2e8"></div>
<div class="a" style="left:735.0px;top:418.4px;width:1.3px;height:151.6px;background:#dfe2e8"></div>
<div class="a" style="left:935.0px;top:418.4px;width:1.3px;height:151.6px;background:#dfe2e8"></div>
<div class="a" style="left:1132.4px;top:418.4px;width:1.3px;height:151.6px;background:#dfe2e8"></div>
<div class="a" style="left:1328.9px;top:418.4px;width:1.3px;height:151.6px;background:#dfe2e8"></div>
<div class="a" style="left:1525.7px;top:418.4px;width:1.3px;height:151.6px;background:#dfe2e8"></div>
<span class="t s" id="t53" style="left:684.85px;top:456.01px;font-size:13.60px;color:#1a1a1a;">0</span>
<span class="t s" id="t54" style="left:684.35px;top:487.00px;font-size:13.60px;color:#1a1a1a;">1</span>
<span class="t s" id="t55" style="left:685.35px;top:517.00px;font-size:13.60px;color:#1a1a1a;">2</span>
<span class="t s" id="t56" style="left:685.35px;top:547.01px;font-size:13.60px;color:#1a1a1a;">3</span>
<span class="t s" id="t57" style="left:741.30px;top:426.00px;font-size:13.60px;color:#1a1a1a;letter-spacing:0.569px;">city</span>
<span class="t s" id="t58" style="left:741.70px;top:456.01px;font-size:13.60px;color:#1a1a1a;letter-spacing:0.080px;">Yangon</span>
<span class="t s" id="t59" style="left:740.70px;top:487.00px;font-size:13.60px;color:#1a1a1a;letter-spacing:0.276px;">Naypyitaw</span>
<span class="t s" id="t60" style="left:741.70px;top:517.00px;font-size:13.60px;color:#1a1a1a;letter-spacing:0.080px;">Yangon</span>
<span class="t s" id="t61" style="left:740.70px;top:547.01px;font-size:13.60px;color:#1a1a1a;letter-spacing:0.165px;">Mandalay</span>
<span class="t s" id="t62" style="left:941.70px;top:426.00px;font-size:13.60px;color:#1a1a1a;letter-spacing:0.454px;">product_line</span>
<span class="t s" id="t63" style="left:940.70px;top:456.01px;font-size:13.60px;color:#1a1a1a;letter-spacing:0.298px;">Electronic accessories</span>
<span class="t s" id="t64" style="left:940.70px;top:487.00px;font-size:13.60px;color:#1a1a1a;letter-spacing:0.298px;">Electronic accessories</span>
<span class="t s" id="t65" style="left:940.70px;top:517.00px;font-size:13.60px;color:#1a1a1a;letter-spacing:0.297px;">Health and beauty</span>
<span class="t s" id="t66" style="left:940.70px;top:547.01px;font-size:13.60px;color:#1a1a1a;letter-spacing:0.212px;">Food and beverages</span>
<span class="t s" id="t67" style="left:1138.70px;top:426.00px;font-size:13.60px;color:#1a1a1a;letter-spacing:0.307px;">total</span>
<span class="t s" id="t68" style="left:1137.90px;top:456.01px;font-size:13.60px;color:#1a1a1a;letter-spacing:-0.413px;">18317.0</span>
<span class="t s" id="t69" style="left:1137.90px;top:487.00px;font-size:13.60px;color:#1a1a1a;letter-spacing:0.287px;">18969.0</span>
<span class="t s" id="t70" style="left:1137.90px;top:517.00px;font-size:13.60px;color:#1a1a1a;letter-spacing:0.187px;">12598.0</span>
<span class="t s" id="t71" style="left:1137.90px;top:547.01px;font-size:13.60px;color:#1a1a1a;letter-spacing:-0.246px;">15215.0</span>
<span class="t s" id="t72" style="left:1335.50px;top:426.00px;font-size:13.60px;color:#1a1a1a;letter-spacing:0.056px;">average</span>
<span class="t s" id="t73" style="left:1335.70px;top:456.01px;font-size:13.60px;color:#1a1a1a;letter-spacing:0.211px;">305.0</span>
<span class="t s" id="t74" style="left:1335.70px;top:487.00px;font-size:13.60px;color:#1a1a1a;letter-spacing:0.211px;">345.0</span>
<span class="t s" id="t75" style="left:1335.70px;top:517.00px;font-size:13.60px;color:#1a1a1a;letter-spacing:0.211px;">268.0</span>
<span class="t s" id="t76" style="left:1335.70px;top:547.01px;font-size:13.60px;color:#1a1a1a;letter-spacing:0.261px;">304.0</span>
<span class="t s" id="t77" style="left:679.90px;top:577.01px;font-size:11.60px;color:#6a6a6a;letter-spacing:0.229px;">4 rows × 4 columns</span>
<div class="a" style="left:1047px;top:634px;width:112px;height:36px;border:1px solid #c9c9c9;border-radius:2.5px;background:#fdfdfc"></div>
<span class="t s" id="t78" style="left:1058.90px;top:645.01px;font-size:13.40px;color:#232323;font-weight:700;letter-spacing:0.147px;">Add code cell</span>
<!-- sheet tabs -->
<div class="a" style="left:608px;top:870.6px;width:992px;height:1.2px;background:#e6e6e6"></div>
<div class="a" style="left:704px;top:872px;width:1px;height:36px;background:#e6e6e6"></div>
<svg style="left:621px;top:883.6px" width="14" height="12" viewBox="0 0 14 12"><path d="M0 1.2H14M0 6H14M0 10.8H9" stroke="#3a3a3a" stroke-width="1.8"/></svg>
<span class="t s" id="t79" style="left:646.30px;top:882.00px;font-size:14.00px;color:#1e1e1e;letter-spacing:-0.149px;">Sheet</span>
<svg style="left:715.6px;top:883.6px" width="13" height="13" viewBox="0 0 13 13"><path d="M6.5 0V13M0 6.5H13" stroke="#4a4a4a" stroke-width="1.6"/></svg>
<div class="a" style="left:608px;top:905px;width:94.4px;height:3px;background:#1f7cc4"></div>
<svg style="left:1572.6px;top:883.4px" width="17" height="14" viewBox="0 0 17 14"><path d="M0 1H17M0 5H17M0 9H17M0 13H17" stroke="#5a5a5a" stroke-width="1.7"/></svg>
<!-- status bar -->
<div class="a" style="left:0;top:907.5px;width:1600px;height:28px;background:#343639"></div>
<div class="a" style="left:14px;top:915.8px;width:19.6px;height:12.2px;border-radius:6.1px;background:#cbcbcb"></div>
<div class="a" style="left:10.8px;top:915px;width:13.8px;height:13.8px;border-radius:50%;background:#96989b"></div>
<span class="t s" id="t80" style="left:35.30px;top:915.00px;font-size:13.00px;color:#fafafa;letter-spacing:0.018px;-webkit-text-stroke-width:0.45px;">Reactive mode</span>
<div class="a" style="left:133px;top:914px;width:1px;height:16px;background:#4a4c50"></div>
<svg style="left:146px;top:912px" width="18" height="18" viewBox="0 0 18 18"><path d="M8.8 0.6C5.6 0.6 5.2 2 5.2 3.2V5.2H9V6H3.2C1.6 6 0.4 7.2 0.4 9.4C0.4 11.6 1.4 12.8 3 12.8H4.8V10.4C4.8 9 6 8 7.4 8H11C12.2 8 13 7.2 13 6V3.2C13 1.8 11.6 0.6 8.8 0.6Z" fill="#d4d5d7"/><path d="M9.2 17.4C12.4 17.4 12.8 16 12.8 14.8V12.8H9V12H14.8C16.4 12 17.6 10.8 17.6 8.6C17.6 6.4 16.6 5.2 15 5.2H13.2V7.6C13.2 9 12 10 10.6 10H7C5.8 10 5 10.8 5 12V14.8C5 16.2 6.4 17.4 9.2 17.4Z" fill="#d4d5d7"/><circle cx="7" cy="2.8" r="0.8" fill="#343639"/><circle cx="11" cy="15.2" r="0.8" fill="#343639"/></svg>
<span class="t s" id="t81" style="left:171.90px;top:915.00px;font-size:13.00px;color:#fafafa;letter-spacing:0.008px;-webkit-text-stroke-width:0.45px;">Python 3.8.12</span>
<div class="a" style="left:263.6px;top:914px;width:1px;height:16px;background:#4a4c50"></div>
<span class="t s" id="t82" style="left:276.30px;top:915.00px;font-size:13.00px;color:#fafafa;letter-spacing:-0.079px;-webkit-text-stroke-width:0.45px;">Calculated: 1</span>
<span class="t s" id="t83" style="left:372.30px;top:915.00px;font-size:13.00px;color:#fafafa;letter-spacing:0.125px;-webkit-text-stroke-width:0.45px;">In process: 0</span>
<span class="t s" id="t84" style="left:467.70px;top:915.00px;font-size:13.00px;color:#fafafa;letter-spacing:0.086px;-webkit-text-stroke-width:0.45px;">Errors: 0</span>
<span class="t s" id="t85" style="left:1202.30px;top:915.00px;font-size:13.00px;color:#fafafa;letter-spacing:0.323px;-webkit-text-stroke-width:0.45px;">Idle</span>
<span class="t s" id="t86" style="left:1246.30px;top:915.00px;font-size:13.00px;color:#fafafa;letter-spacing:0.169px;-webkit-text-stroke-width:0.45px;">Machine: t2.medium</span>
<div class="a" style="left:1377px;top:914px;width:1px;height:16px;background:#4a4c50"></div>
<span class="t s" id="t87" style="left:1389.50px;top:915.00px;font-size:13.00px;color:#fafafa;letter-spacing:-0.549px;-webkit-text-stroke-width:0.45px;">CPU:</span>
<span class="t s" id="t88" style="left:1429.30px;top:915.00px;font-size:13.00px;color:#fafafa;letter-spacing:-1.180px;-webkit-text-stroke-width:0.45px;">18%</span>
<span class="t s" id="t89" style="left:1464.30px;top:915.00px;font-size:13.00px;color:#fafafa;letter-spacing:0.069px;-webkit-text-stroke-width:0.45px;">FreeMem:</span>
<span class="t s" id="t90" style="left:1541.30px;top:915.00px;font-size:13.00px;color:#fafafa;letter-spacing:-0.130px;-webkit-text-stroke-width:0.45px;">2169MB</span>
<div class="a" style="left:0;top:0;width:1600px;height:935px;border-radius:11px 11px 10px 10px;box-shadow:inset 0 1px 0 0 #7d8084;pointer-events:none"></div>
<div class="a" style="left:0;top:0;width:1600px;height:151px;border-radius:11px 11px 0 0;box-shadow:inset 1px 0 0 0 rgba(125,128,132,.6), inset -1px 0 0 0 rgba(125,128,132,.6), inset 0 1px 0 0 #85888c;pointer-events:none"></div>
<div class="a" style="left:0;top:908px;width:1600px;height:27px;border-radius:0 0 10px 10px;box-shadow:inset 1px 0 0 0 rgba(125,128,132,.6), inset -1px 0 0 0 rgba(125,128,132,.6), inset 0 -1px 0 0 rgba(125,128,132,.6);pointer-events:none"></div>
</div>
</body></html>
